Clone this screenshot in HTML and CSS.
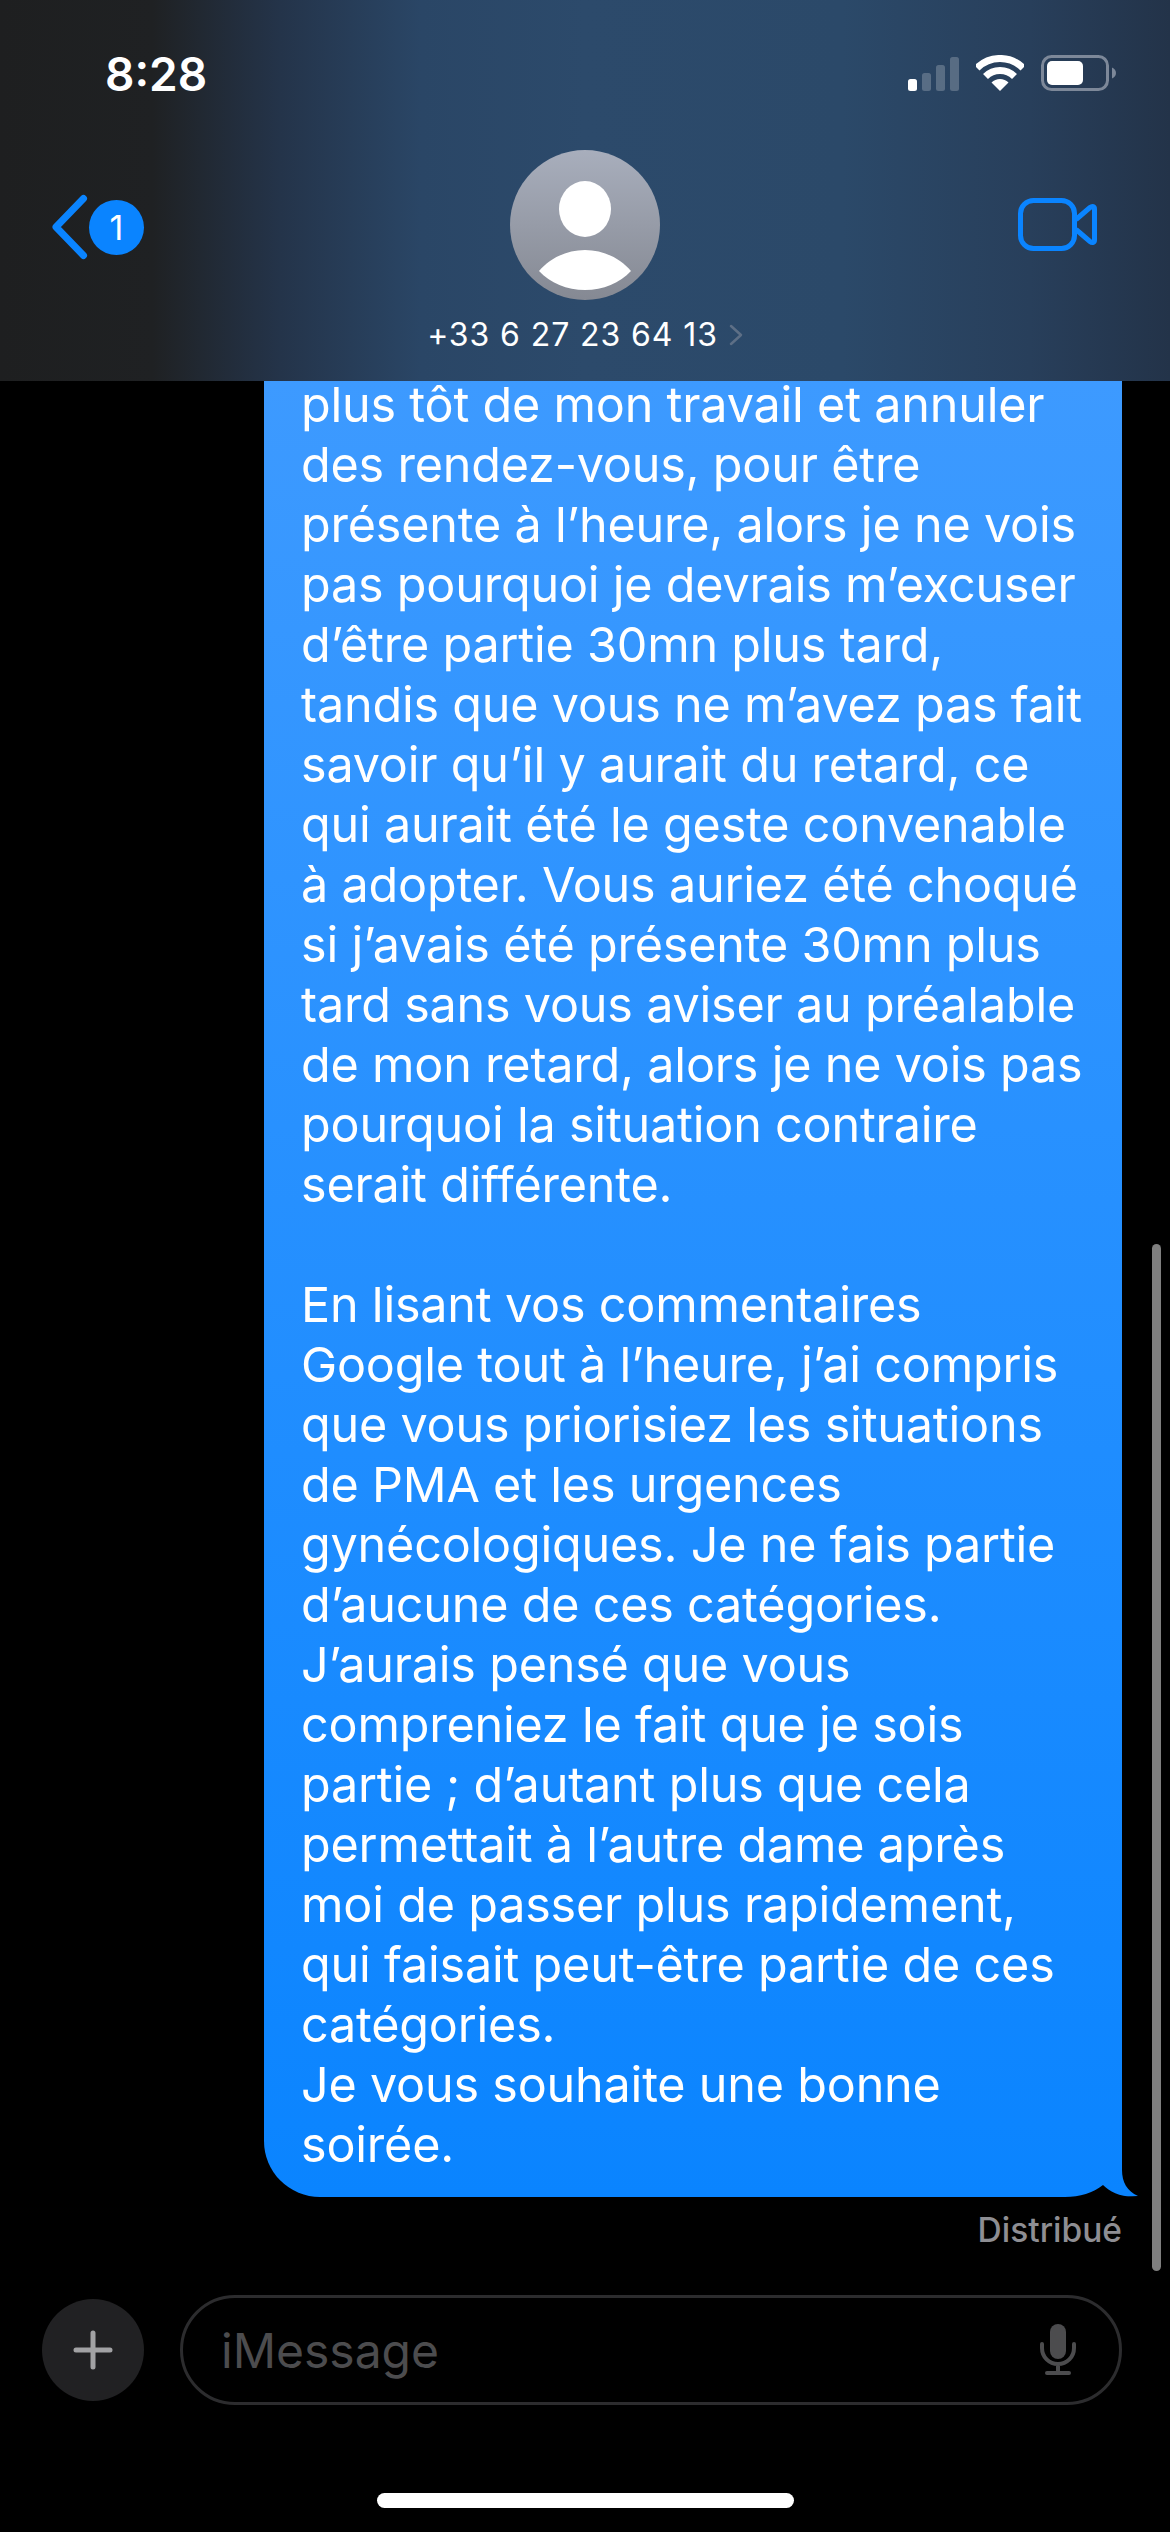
FILE: index.html
```html
<!DOCTYPE html>
<html lang="fr">
<head>
<meta charset="utf-8">
<title>iMessage</title>
<link rel="stylesheet" href="styles.css">
</head>
<body>
<div class="screen">
  <header class="header">
    <div class="status">
      <span class="time">8:28</span>
      <div class="status-icons">
        <svg class="signal" width="51" height="34" viewBox="0 0 51 34">
          <rect x="0" y="22" width="9" height="12" rx="2.5" fill="#fff"/>
          <rect x="14" y="16" width="9" height="18" rx="2.5" fill="#fff" opacity=".22"/>
          <rect x="28" y="8" width="9" height="26" rx="2.5" fill="#fff" opacity=".22"/>
          <rect x="42" y="0" width="9" height="34" rx="2.5" fill="#fff" opacity=".22"/>
        </svg>
        <svg class="wifi" width="48" height="36" viewBox="0 0 48 36">
          <path d="M1 13A32.5 32.5 0 0 1 47 13" fill="none" stroke="#fff" stroke-width="7"/>
          <path d="M9.5 21.5A20.5 20.5 0 0 1 38.5 21.5" fill="none" stroke="#fff" stroke-width="7"/>
          <path d="M24 36L15.5 27.5A12 12 0 0 1 32.5 27.5Z" fill="#fff"/>
        </svg>
        <svg class="battery" width="75" height="36" viewBox="0 0 75 36">
          <rect x="1.5" y="1.5" width="65" height="33" rx="9" fill="none" stroke="#7d8899" stroke-width="3"/>
          <rect x="6" y="6" width="36" height="24" rx="5" fill="#fff"/>
          <path d="M71 12.500C73.500 13.500 75 15.500 75 18C75 20.500 73.500 22.500 71 23.500Z" fill="#7d8899"/>
        </svg>
      </div>
    </div>
    <div class="nav">
      <div class="nav-back">
        <svg class="chevron" width="40" height="66" viewBox="0 0 40 66">
          <path d="M33.500 4.500L6 33L33.500 61.500" fill="none" stroke="#0a84ff" stroke-width="7" stroke-linecap="round" stroke-linejoin="round"/>
        </svg>
        <span class="badge">1</span>
      </div>
      <div class="contact">
        <svg class="avatar" width="150" height="150" viewBox="0 0 150 150">
          <defs>
            <linearGradient id="avatarFill" x1="0" y1="0" x2="0" y2="1">
              <stop offset="0" stop-color="#a8aebc"/>
              <stop offset="1" stop-color="#858993"/>
            </linearGradient>
          </defs>
          <circle cx="75" cy="75" r="75" fill="url(#avatarFill)"/>
          <ellipse cx="75" cy="59" rx="26" ry="28" fill="#fff"/>
          <path d="M29 121C40 108 57 100 75 100C93 100 110 108 121 121C110 133 93 140 75 140C57 140 40 133 29 121Z" fill="#fff"/>
        </svg>
        <div class="contact-name">
          <span>+33 6 27 23 64 13</span>
          <svg width="14" height="22" viewBox="0 0 14 22">
            <path d="M2 2L12 11L2 20" fill="none" stroke="#5d6f86" stroke-width="2.500" stroke-linecap="round" stroke-linejoin="round"/>
          </svg>
        </div>
      </div>
      <svg class="video" width="79" height="53" viewBox="0 0 79 53">
        <rect x="2.500" y="2.500" width="54" height="48" rx="13" fill="none" stroke="#0a84ff" stroke-width="5"/>
        <path d="M58 21.500L72 9.500C74.500 7.500 76.500 8.500 76.500 11V42C76.500 44.500 74.500 45.500 72 43.500L58 31.500" fill="none" stroke="#0a84ff" stroke-width="5" stroke-linejoin="round"/>
      </svg>
    </div>
  </header>

  <main class="thread">
    <div class="bubble">
      <p class="bubble-text">plus tôt de mon travail et annuler<br>des rendez-vous, pour être<br>présente à l’heure, alors je ne vois<br>pas pourquoi je devrais m’excuser<br>d’être partie 30mn plus tard,<br>tandis que vous ne m’avez pas fait<br>savoir qu’il y aurait du retard, ce<br>qui aurait été le geste convenable<br>à adopter. Vous auriez été choqué<br>si j’avais été présente 30mn plus<br>tard sans vous aviser au préalable<br>de mon retard, alors je ne vois pas<br>pourquoi la situation contraire<br>serait différente.<br><br>En lisant vos commentaires<br>Google tout à l’heure, j’ai compris<br>que vous priorisiez les situations<br>de PMA et les urgences<br>gynécologiques. Je ne fais partie<br>d’aucune de ces catégories.<br>J’aurais pensé que vous<br>compreniez le fait que je sois<br>partie ; d’autant plus que cela<br>permettait à l’autre dame après<br>moi de passer plus rapidement,<br>qui faisait peut-être partie de ces<br>catégories.<br>Je vous souhaite une bonne<br>soirée.</p>
      <svg class="tail" width="78" height="37" viewBox="0 0 78 37">
        <path d="M62 0V10C62 22 67 31 78 36L62 37Z" fill="#0a84ff"/>
        <path d="M5 37C20 37 33 33 43 25C50 32 62 38 78 36.500V37Z" fill="#000"/>
      </svg>
    </div>
    <div class="delivered">Distribué</div>
  </main>

  <footer class="composer">
    <button class="plus" type="button">
      <svg width="40" height="40" viewBox="0 0 40 40">
        <path d="M3 20H37M20 3V37" stroke="#a2a2a4" stroke-width="5" stroke-linecap="round"/>
      </svg>
    </button>
    <div class="field">
      <span class="placeholder">iMessage</span>
      <svg class="mic" width="36" height="52" viewBox="0 0 36 52">
        <rect x="10" y="0" width="16" height="35" rx="8" fill="#4c4c4e"/>
        <path d="M2 20V24C2 33 9 40 18 40C27 40 34 33 34 24V20M18 40V48" fill="none" stroke="#4c4c4e" stroke-width="4" stroke-linecap="round"/>
        <path d="M7 49H29" stroke="#4c4c4e" stroke-width="4" stroke-linecap="round"/>
      </svg>
    </div>
  </footer>

  <div class="home-area"><span class="home-indicator"></span></div>
  <span class="scrollbar"></span>
</div>
</body>
</html>
```

FILE: styles.css
```css
* { box-sizing: border-box; }

html, body {
  margin: 0;
  background: #000;
}

.screen {
  position: relative;
  width: 1170px;
  height: 2532px;
  display: flex;
  flex-direction: column;
  overflow: hidden;
  background: #000;
  color: #fff;
  font-family: Inter, "Liberation Sans", sans-serif;
}

.header {
  height: 381px;
  flex: none;
  background: linear-gradient(90deg, #1e1f20 0, #1f2123 13%, #24344a 24%, #2a4666 36%, #2c4a6b 50%, #2b4969 72%, #283f5b 88%, #233349 100%);
}

.status {
  height: 109px;
  padding: 55px 54px 0 105px;
  display: flex;
  justify-content: space-between;
  align-items: flex-start;
}

.time {
  font-size: 46px;
  line-height: 38px;
  font-weight: 600;
}

.status-icons {
  display: flex;
  align-items: flex-end;
  gap: 17px;
  height: 36px;
}

.signal { display: block; }
.wifi { display: block; }
.battery { display: block; }

.nav {
  display: grid;
  grid-template-columns: 1fr 150px 1fr;
  padding: 41px 50px 0;
  align-items: start;
}

.nav-back {
  display: flex;
  align-items: center;
  margin-top: 44px;
}

.chevron { display: block; }

.badge {
  width: 55px;
  height: 55px;
  margin-left: -1px;
  border-radius: 50%;
  background: #0a84ff;
  display: flex;
  align-items: center;
  justify-content: center;
  font-size: 34px;
  font-weight: 400;
}

.contact {
  display: flex;
  flex-direction: column;
  align-items: center;
}

.avatar { display: block; flex: none; }

.contact-name {
  display: flex;
  align-items: center;
  gap: 11px;
  margin-top: 18px;
  white-space: nowrap;
  font-size: 32px;
  line-height: 34px;
  letter-spacing: 0.9px;
}

.video {
  justify-self: end;
  margin: 48px 23px 0 0;
  display: block;
}

.thread {
  flex: 1;
  min-height: 0;
  padding: 0 48px 0 264px;
}

.bubble {
  display: flow-root;
  position: relative;
  width: 858px;
  padding: 0 30px 22px 37px;
  border-radius: 0 0 0 56px;
  background: linear-gradient(180deg, #3d9aff 0, #0a84ff 100%);
}

.bubble-text {
  margin: -6px 0 0;
  font-size: 48.5px;
  line-height: 60px;
  letter-spacing: -0.2px;
  white-space: nowrap;
}

.tail {
  position: absolute;
  right: -16px;
  bottom: 0;
  display: block;
}

.delivered {
  margin-top: 13px;
  text-align: right;
  font-size: 33.5px;
  line-height: 40px;
  font-weight: 500;
  color: #8e8e93;
}

.composer {
  flex: none;
  height: 110px;
  padding: 0 48px 0 42px;
  display: flex;
  align-items: center;
  gap: 36px;
}

.plus {
  flex: none;
  width: 102px;
  height: 102px;
  padding: 0;
  border: 0;
  border-radius: 50%;
  background: #212123;
  display: flex;
  align-items: center;
  justify-content: center;
}

.field {
  flex: 1;
  height: 110px;
  padding: 0 43px 0 38px;
  border: 3px solid #2c2c2e;
  border-radius: 55px;
  display: flex;
  align-items: center;
  justify-content: space-between;
}

.placeholder {
  font-size: 48px;
  color: #4c4c4e;
}

.mic { display: block; }

.home-area {
  flex: none;
  height: 127px;
  padding-top: 88px;
  display: flex;
  justify-content: center;
}

.home-indicator {
  display: block;
  width: 417px;
  height: 15px;
  border-radius: 8px;
  background: #fff;
}

.scrollbar {
  position: absolute;
  top: 1244px;
  left: 1152px;
  width: 9px;
  height: 1027px;
  border-radius: 5px;
  background: #7f7f7f;
}
```
